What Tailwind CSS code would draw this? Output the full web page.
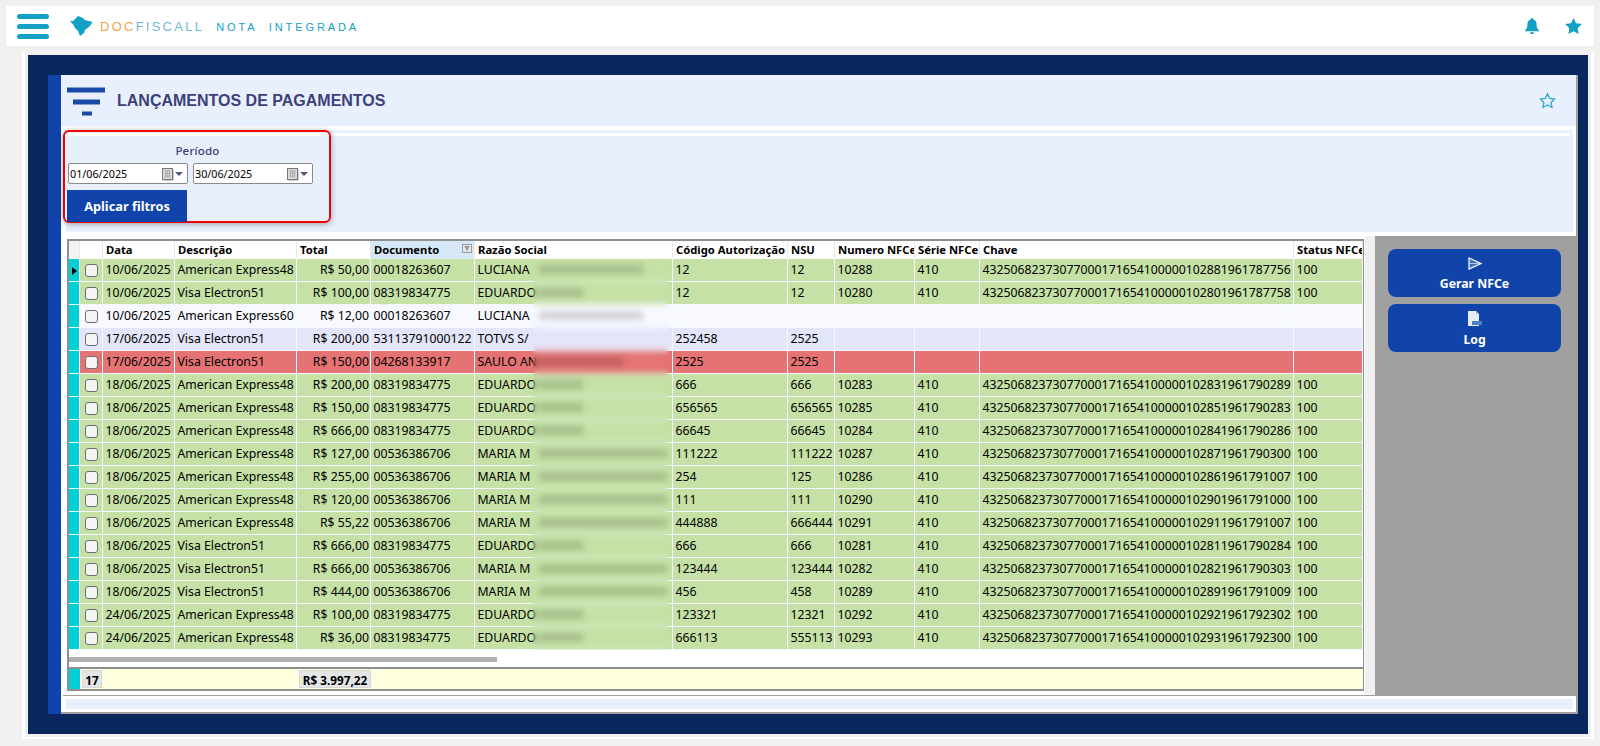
<!DOCTYPE html>
<html lang="pt-BR">
<head>
    <meta charset="UTF-8">
    <title>Lançamentos de Pagamentos</title>
    <script src="https://cdn.jsdelivr.net/npm/@tailwindcss/browser@4"></script>
</head>
<body class="bg-[#f0f0f0] h-[746px] overflow-hidden font-['Noto_Sans',sans-serif] text-black">
    <!-- top bar -->
    <header class="mx-[6px] mt-[6px] h-[40px] bg-white flex items-center pl-[11px] pr-[12px]">
        <div class="w-[32px] mt-[1px] flex flex-col gap-[5px]">
            <span class="h-[5px] rounded-full bg-[#12a0c4]"></span>
            <span class="h-[5px] rounded-full bg-[#12a0c4]"></span>
            <span class="h-[5px] rounded-full bg-[#12a0c4]"></span>
        </div>
        <svg class="ml-[21px] w-[24px] h-[21px]" viewBox="0 0 24 21"><path fill="#12a0c4" d="M0 5 3 5 6 2 8 0 13 2 15 4 22.500 6 20 10 15 14 14 17 10 20 8 15 5 12 3.500 9Z"/></svg>
        <span class="ml-[6px] mt-[2px] font-['Liberation_Sans',sans-serif] text-[13px] tracking-[2.25px] text-[#f2a24a]">DOC<span class="text-[#6fb7cf]">FISCALL</span></span>
        <span class="ml-[12px] mt-[2px] font-['Liberation_Sans',sans-serif] text-[11px] tracking-[2.9px] text-[#12a0c4] whitespace-pre">NOTA  INTEGRADA</span>
        <div class="ml-auto flex items-center gap-[26px]">
            <svg class="w-[14px] h-[16px]" viewBox="0 0 14 16"><path fill="#12a0c4" d="M7 0a1 1 0 0 1 1 1.200c2.400.5 3.600 2.500 3.600 5 0 3 .6 4.600 2.400 6.300v.8H0v-.8C1.800 10.800 2.400 9.200 2.400 6.200c0-2.500 1.200-4.500 3.600-5A1 1 0 0 1 7 0ZM5 14.300h4a2 2 0 0 1-4 0Z"/></svg>
            <svg class="w-[17px] h-[16px]" viewBox="0 0 24 23"><path fill="#12a0c4" d="M12 0l3.700 7.600 8.300 1.200-6 5.900 1.400 8.300L12 19l-7.400 4L6 14.700 0 8.800l8.300-1.200Z"/></svg>
        </div>
    </header>

    <!-- frame -->
    <main class="ml-[22px] mr-[6px] mt-[6px] h-[687px] border-x-[3px] border-b-2 border-white px-[3px] pt-[3px] pb-[3px]">
        <div class="h-[679px] bg-[#08275f] pt-[20px] pr-[10px] pb-[20px] pl-[20px] flex">
            <div class="w-[13px] shrink-0 bg-[#1044aa]"></div>
            <div class="flex-1 min-w-0 bg-white border-b-2 border-r-2 border-[#a0a0a0] flex flex-col">
                <!-- title -->
                <div class="h-[51px] shrink-0 bg-[#e8f0fe] flex items-center pl-[5px] pr-[20px]">
                    <svg class="w-[40px] h-[32px]" viewBox="0 0 40 32">
                        <rect x="1" y="2.500" width="38" height="5" fill="#1a49a5"/>
                        <rect x="7" y="14.500" width="27" height="5" fill="#1a49a5"/>
                        <rect x="16" y="26.500" width="10" height="4" fill="#1a49a5"/>
                    </svg>
                    <h1 class="ml-[11px] font-['Liberation_Sans',sans-serif] font-bold text-[16px] text-[#3c4178]">LANÇAMENTOS DE PAGAMENTOS</h1>
                    <svg class="ml-auto w-[17px] h-[17px]" viewBox="0 0 24 23" fill="none" stroke="#2ba7cf" stroke-width="1.800"><path d="M12 2l3.100 6.400 7 1-5 4.900 1.200 7L12 17.900l-6.300 3.400 1.200-7-5-4.900 7-1Z"/></svg>
                </div>
                <!-- filter panel -->
                <div class="relative shrink-0 mt-[4px] ml-[5px] mr-[3px] h-[102px] bg-[#e8f0fe] pt-[3px]">
                    <div class="h-[3px] bg-white mr-[3px] ml-[2px]"></div>
                    <div class="absolute left-[-3px] top-[0px] w-[268px] h-[93px] rounded-[6px] border-2 border-[#f00000] shadow-[0_1px_6px_rgba(0,0,0,0.35)] pl-[2px] pt-[11px]">
                        <p class="w-[261px] text-center font-medium text-[11.5px] leading-[16px] tracking-[0.2px] text-[#3c4178]">Período</p>
                        <div class="flex gap-[5px] mt-[4px] ml-[1px]">
                            <div class="w-[120px] h-[21px] bg-white border border-[#8a8a8a] rounded-[2px] flex items-center pl-[1px] pr-[3px] pt-[1px] text-[10.75px]">
                                <span>01/06/2025</span>
                                <svg class="ml-auto w-[22px] h-[14px]" viewBox="0 0 22 14"><rect x="1.500" y="2.500" width="10" height="11" fill="#999"/><rect x="0.500" y="1.500" width="10" height="11" fill="#dcdcdc" stroke="#777"/><path d="M2.500 4h6M2.500 6.500h6M2.500 9h6M3.500 3v8M5.500 3v8M7.500 3v8" stroke="#a0a0a0" stroke-width="0.700"/><path d="M13 5h8l-4 4Z" fill="#4a5a80"/></svg>
                            </div>
                            <div class="w-[120px] h-[21px] bg-white border border-[#8a8a8a] rounded-[2px] flex items-center pl-[1px] pr-[3px] pt-[1px] text-[10.75px]">
                                <span>30/06/2025</span>
                                <svg class="ml-auto w-[22px] h-[14px]" viewBox="0 0 22 14"><rect x="1.500" y="2.500" width="10" height="11" fill="#999"/><rect x="0.500" y="1.500" width="10" height="11" fill="#dcdcdc" stroke="#777"/><path d="M2.500 4h6M2.500 6.500h6M2.500 9h6M3.500 3v8M5.500 3v8M7.500 3v8" stroke="#a0a0a0" stroke-width="0.700"/><path d="M13 5h8l-4 4Z" fill="#4a5a80"/></svg>
                            </div>
                        </div>
                        <button class="block mt-[6px] w-[120px] h-[32px] pt-[1px] bg-[#1044aa] text-white font-bold text-[12.75px]">Aplicar filtros</button>
                    </div>
                </div>
                <!-- grid + side actions -->
                <div class="h-[463px] shrink-0 flex pl-[6px]">
                    <div class="w-[1298px] shrink-0 pt-[7px]">
                        <div class="relative w-[1297px] h-[428px] bg-white border-t-2 border-l-2 border-r border-[#8f8f8f] overflow-hidden">
                            <div id="grid" class="text-[12.25px] leading-[22px] whitespace-nowrap"></div>
                            <!-- blur over names -->
                            <div id="mask" class="absolute left-[464px] top-[18px] w-[135px] h-[391px] backdrop-blur-[3px]"></div>
                            <div class="absolute left-0 top-[416px] w-[428px] h-[5px] bg-[#b0b0b0]"></div>
                        </div>
                        <div class="w-[1297px] h-[24px] bg-[#ffffe0] border-y-2 border-l-2 border-r border-[#8f8f8f] flex text-[11.75px] font-bold leading-[18px]">
                            <span class="w-[11px] bg-[#00cfd5]"></span>
                            <span class="ml-[2px] mt-[1px] w-[20px] h-[18px] bg-[#e4e6e6] border border-[#d8d8d8] text-center">17</span>
                            <span class="ml-[197px] mt-[1px] w-[72px] h-[18px] bg-[#e4e6e6] border border-[#d8d8d8] text-center">R$ 3.997,22</span>
                        </div>
                    </div>
                    <div class="w-[10px] shrink-0 mt-[4px] bg-[#f0f0f0]"></div>
                    <aside class="flex-1 min-w-0 mt-[4px] bg-[#a0a0a0] pt-[13px] pl-[13px]">
                        <button class="w-[173px] h-[48px] rounded-[8px] bg-[#1044aa] text-white font-bold text-[12.25px] flex flex-col items-center pt-[8px]">
                            <svg class="w-[14px] h-[13px]" viewBox="0 0 14 13"><path d="M1 1 13 6.500 1 12Z" fill="#3e74bd" stroke="#fff" stroke-width="1.200"/><path d="M1 6.500h12" stroke="#cfe0f5" stroke-width="0.800"/></svg>
                            <span class="mt-[5px] leading-[18px]">Gerar NFCe</span>
                        </button>
                        <button class="mt-[7px] w-[173px] h-[48px] rounded-[8px] bg-[#1044aa] text-white font-bold text-[12.25px] flex flex-col items-center pt-[7px]">
                            <svg class="w-[15px] h-[15px]" viewBox="0 0 15 15"><path d="M1 0H9L12 3V15H1Z" fill="#e8edf5"/><path d="M9 0V3H12Z" fill="#a8b8d0"/><rect x="5" y="10" width="10" height="4" fill="#4a80c0"/></svg>
                            <span class="mt-[5px] leading-[18px]">Log</span>
                        </button>
                    </aside>
                </div>
                <div class="shrink-0 h-px ml-[2px] bg-[#a0a0a0]"></div>
                <div class="shrink-0 h-[10px] mt-[3px] ml-[5px] mr-[3px] bg-[#e8f0fe]"></div>
            </div>
        </div>
    </main>

    <script>
        // column order: data, descricao, total, documento, razao, codigo, nsu, numero, serie, chave, status
        const colWidths = [72, 122, 74, 104, 198, 115, 47, 80, 65, 314, 69];
        const headers = ['Data', 'Descrição', 'Total', 'Documento', 'Razão Social', 'Código Autorização', 'NSU', 'Numero NFCe', 'Série NFCe', 'Chave', 'Status NFCe'];

        const rows = [
            ['g', '10/06/2025', 'American Express48', 'R$ 50,00', '00018263607', 'LUCIANA', '12', '12', '10288', '410', '43250682373077000171654100000102881961787756', '100', 104],
            ['g', '10/06/2025', 'Visa Electron51', 'R$ 100,00', '08319834775', 'EDUARDO', '12', '12', '10280', '410', '43250682373077000171654100000102801961787758', '100', 44],
            ['w', '10/06/2025', 'American Express60', 'R$ 12,00', '00018263607', 'LUCIANA', '', '', '', '', '', '', 104],
            ['l', '17/06/2025', 'Visa Electron51', 'R$ 200,00', '53113791000122', 'TOTVS S/', '252458', '2525', '', '', '', '', 0],
            ['r', '17/06/2025', 'Visa Electron51', 'R$ 150,00', '04268133917', 'SAULO AN', '2525', '2525', '', '', '', '', 84],
            ['g', '18/06/2025', 'American Express48', 'R$ 200,00', '08319834775', 'EDUARDO', '666', '666', '10283', '410', '43250682373077000171654100000102831961790289', '100', 44],
            ['g', '18/06/2025', 'American Express48', 'R$ 150,00', '08319834775', 'EDUARDO', '656565', '656565', '10285', '410', '43250682373077000171654100000102851961790283', '100', 44],
            ['g', '18/06/2025', 'American Express48', 'R$ 666,00', '08319834775', 'EDUARDO', '66645', '66645', '10284', '410', '43250682373077000171654100000102841961790286', '100', 44],
            ['g', '18/06/2025', 'American Express48', 'R$ 127,00', '00536386706', 'MARIA M', '111222', '111222', '10287', '410', '43250682373077000171654100000102871961790300', '100', 128],
            ['g', '18/06/2025', 'American Express48', 'R$ 255,00', '00536386706', 'MARIA M', '254', '125', '10286', '410', '43250682373077000171654100000102861961791007', '100', 128],
            ['g', '18/06/2025', 'American Express48', 'R$ 120,00', '00536386706', 'MARIA M', '111', '111', '10290', '410', '43250682373077000171654100000102901961791000', '100', 128],
            ['g', '18/06/2025', 'American Express48', 'R$ 55,22', '00536386706', 'MARIA M', '444888', '666444', '10291', '410', '43250682373077000171654100000102911961791007', '100', 128],
            ['g', '18/06/2025', 'Visa Electron51', 'R$ 666,00', '08319834775', 'EDUARDO', '666', '666', '10281', '410', '43250682373077000171654100000102811961790284', '100', 44],
            ['g', '18/06/2025', 'Visa Electron51', 'R$ 666,00', '00536386706', 'MARIA M', '123444', '123444', '10282', '410', '43250682373077000171654100000102821961790303', '100', 128],
            ['g', '18/06/2025', 'Visa Electron51', 'R$ 444,00', '00536386706', 'MARIA M', '456', '458', '10289', '410', '43250682373077000171654100000102891961791009', '100', 128],
            ['g', '24/06/2025', 'American Express48', 'R$ 100,00', '08319834775', 'EDUARDO', '123321', '12321', '10292', '410', '43250682373077000171654100000102921961792302', '100', 44],
            ['g', '24/06/2025', 'American Express48', 'R$ 36,00', '08319834775', 'EDUARDO', '666113', '555113', '10293', '410', '43250682373077000171654100000102931961792300', '100', 44],
        ];

        const rowColors = { g: 'bg-[#c5e1a5]', w: 'bg-[#f7f9ff]', l: 'bg-[#e3e6f8]', r: 'bg-[#e57373]' };

        function renderGrid() {
            const grid = document.getElementById('grid');
            let html = '<div class="flex h-[18px] font-bold text-[11.25px] bg-white">' +
                '<div class="w-[11px] bg-[#f4f4f4] border-r border-[#e8e8e8]"></div><div class="w-[23px] border-r border-[#e8e8e8]"></div>';
            headers.forEach((h, i) => {
                const active = h === 'Documento' ? 'bg-[#d6e8f8] relative' : '';
                const icon = h === 'Documento'
                    ? '<svg class="absolute right-[2px] top-[3px] w-[10px] h-[9px]" viewBox="0 0 10 9"><rect x="0.5" y="0.5" width="9" height="8" fill="#e8e8e8" stroke="#999"/><path d="M2 2h6L6 5v2L4 6V5Z" fill="#999"/></svg>' : '';
                html += `<div class="${active} overflow-hidden pl-[3px] leading-[18px] border-r border-[#e8e8e8]" style="width:${colWidths[i]}px">${h}${icon}</div>`;
            });
            html += '</div>';

            rows.forEach((r, idx) => {
                const marker = idx === 0 ? '<span class="block w-0 h-0 mt-[8px] ml-[3px] border-y-[4px] border-y-transparent border-l-[5px] border-l-black"></span>' : '';
                html += `<div class="flex h-[23px] border-b border-[#f4f7ff] ${rowColors[r[0]]}">` +
                    `<div class="w-[11px] bg-[#00cfd5] border-r border-[#f4f7ff] shrink-0">${marker}</div>` +
                    '<div class="w-[23px] shrink-0 flex items-center justify-center border-r border-[#f4f7ff]"><span class="block w-[13px] h-[13px] rounded-[3px] bg-[#f4f4f4] border border-[#6e6e6e]"></span></div>';
                for (let c = 0; c < 11; c++) {
                    const align = c === 2 ? 'text-right pr-[1px]' : 'pl-[2.5px]';
                    html += `<div class="${align} overflow-hidden border-r border-[#f4f7ff]" style="width:${colWidths[c]}px">${r[c + 1]}</div>`;
                }
                html += '</div>';
            });
            grid.innerHTML = html;

            // smudges under the blur, where the names were covered
            document.getElementById('mask').innerHTML = rows.map(r =>
                `<div class="h-[23px] pt-[6px] pl-[6px]"><div class="h-[9px] bg-black/15 blur-[3px]" style="width:${r[12]}px"></div></div>`
            ).join('');
        }

        renderGrid();
    </script>
</body>
</html>
